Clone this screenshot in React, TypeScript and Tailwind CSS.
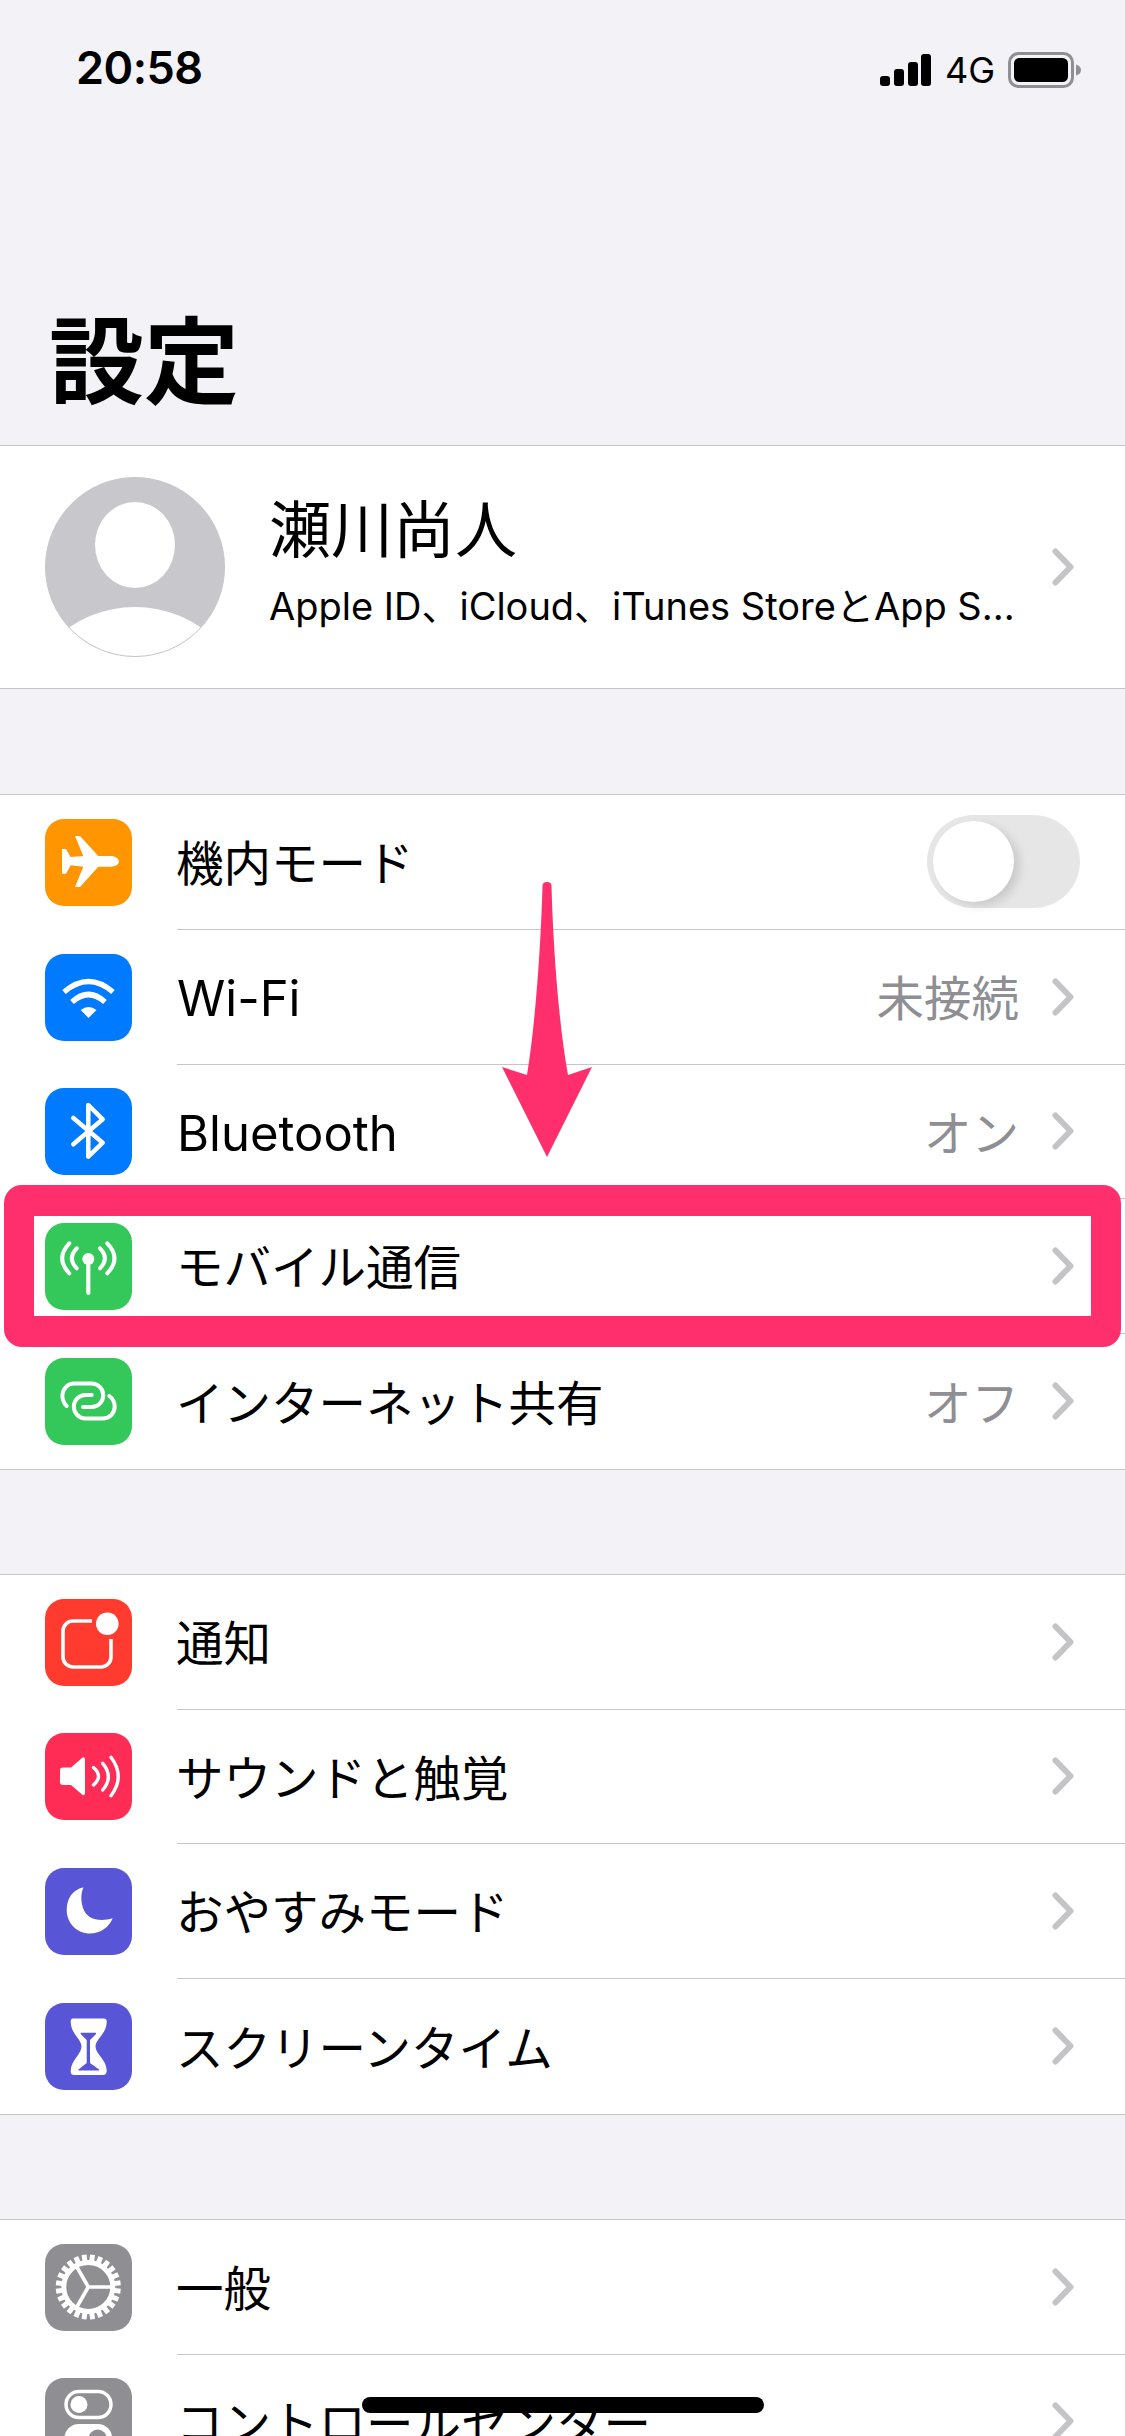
const FONT = "font-['Inter','Noto_Sans_CJK_JP',sans-serif]";

function Chevron() {
  return (
    <svg width="22" height="38" viewBox="0 0 22 38" className="shrink-0">
      <path d="M3.5 3.5 L18.5 19 L3.5 34.5" fill="none" stroke="#c4c4c7" strokeWidth="6" strokeLinecap="round" strokeLinejoin="round" />
    </svg>
  );
}

const sw = { fill: "none", stroke: "#fff", strokeLinecap: "round" as const, strokeLinejoin: "round" as const };

function Plane() {
  return <path fill="#fff" d="M74 42.5C74 39.5 70 37 66 37H53.3L35 17H30L38.3 37L25.7 38L21 30H17V54.7H21L25.7 46.3L38.3 47.7L30 68H35L53.3 47.7H66C70 47.7 74 45.5 74 42.5Z" />;
}
function Wifi() {
  return (
    <g>
      <path {...sw} strokeLinecap="butt" strokeWidth="5.5" d="M19 38Q43.5 17 68 38" />
      <path {...sw} strokeLinecap="butt" strokeWidth="5.5" d="M27 48Q43.5 33 60 48" />
      <path fill="#fff" d="M35.7 56Q43.5 50 51.5 56L43.5 64Z" />
    </g>
  );
}
function Bluetooth() {
  return <path {...sw} strokeWidth="4.5" d="M28.3 30L57.7 54.7L43.3 68.7V17L57.7 31.3L28.3 56.3" />;
}
function Cell() {
  return (
    <g>
      <circle cx="43.3" cy="36" r="6" fill="#fff" />
      <path {...sw} strokeWidth="4.2" d="M43.3 38V70" />
      <path {...sw} strokeWidth="4" d="M31.7 25.3Q22 35.3 31.7 45.3M24.3 20.3Q10 35.3 24.3 50.3M55 25.3Q64.7 35.3 55 45.3M62.3 20.3Q76.7 35.3 62.3 50.3" />
    </g>
  );
}
function Hotspot() {
  return (
    <g>
      <path {...sw} strokeWidth="4" d="M21.7 48C18 45 17 39 17.5 36C18.5 30 23 25.5 29 25.5H46.5A11.75 11.75 0 0 1 46.5 49H38" />
      <path {...sw} strokeWidth="4" d="M46.7 37H40.5A11.7 11.7 0 0 0 40.5 60.4H58A11.7 11.7 0 0 0 69.7 48.7C69.7 44 67 40 64.3 38" />
    </g>
  );
}
function Bell() {
  return (
    <g>
      <path {...sw} strokeWidth="3.6" strokeLinecap="butt" d="M47 22H28A10 10 0 0 0 18 32V58A10 10 0 0 0 28 68H56A10 10 0 0 0 66 58V40" />
      <circle cx="62.3" cy="24.7" r="11.3" fill="#fff" />
    </g>
  );
}
function Sound() {
  return (
    <g>
      <path fill="#fff" d="M18 34.5H26L37 25Q40 23 40 27V59.5Q40 63.5 37 61.5L26 52H18Q15 52 15 49V37.5Q15 34.5 18 34.5Z" />
      <path {...sw} strokeWidth="3.4" d="M48.5 34.5Q58.5 43.3 48.5 52M57.7 30.3Q69 43.7 57.7 57M66 24.3Q80.5 43.5 66 62.7" />
    </g>
  );
}
function Moon() {
  return <path fill="#fff" d="M38.5 19.3C27 22 21.7 31 21.7 42C21.7 55 32 65.5 45 65.5C56 65.5 64 59 67.7 50.3C55 54 42 52 38 40C35.5 32 36 25 38.5 19.3Z" />;
}
function Hourglass() {
  return (
    <g>
      <path fill="#fff" d="M28 15.5H59Q62 15.5 61.7 19C61.5 31 50.5 36 50.5 43.5C50.5 51 62 57 61.7 68Q61.5 72 58 72H29Q25.5 72 25.7 68C26 57 36.5 51 36.5 43.5C36.5 36 26 31 25.7 19Q25.5 15.5 28 15.5Z" />
      <path fill="#5856d6" d="M35.7 29.7H51V31L45 37V60L54 66.5V67.5H33.5V66.5L41.7 60V37L35.7 31Z" />
    </g>
  );
}
function Gear() {
  const teeth = Array.from({ length: 24 }, (_, i) => i * 15 + 7.5);
  return (
    <g>
      {teeth.map((a) => (
        <path key={a} d="M43.3 17V10.5" stroke="#fff" strokeWidth="5" transform={`rotate(${a} 43.3 43)`} />
      ))}
      <circle cx="43.3" cy="43" r="24.5" fill="none" stroke="#fff" strokeWidth="5" />
      <path {...sw} strokeWidth="3.6" d="M43.3 43H68M43.3 43L31 21.5M43.3 43L31 64.5" />
    </g>
  );
}
function Toggles() {
  return (
    <g>
      <rect x="21" y="13.5" width="45" height="26" rx="13" fill="none" stroke="#fff" strokeWidth="3.5" />
      <circle cx="34" cy="26.5" r="8.5" fill="#fff" />
      <rect x="19.3" y="46" width="48" height="29" rx="14.5" fill="#fff" />
      <circle cx="52.7" cy="60.5" r="9" fill="#8e8e93" />
    </g>
  );
}

function Row({ icon, color, label, value, last, latin, toggle }: { icon: React.ReactNode; color: string; label: string; value?: string; last?: boolean; latin?: boolean; toggle?: boolean }) {
  return (
    <div className="flex h-[134.75px] items-center pl-[45px]">
      <div className={`w-[87px] h-[87px] rounded-[19px] shrink-0 ${color}`}>
        <svg width="87" height="87" viewBox="0 0 87 87">{icon}</svg>
      </div>
      <div className={`ml-[45px] flex-1 h-full flex items-center pr-[51px] ${last ? "" : "border-b border-[#c6c6c8]"}`}>
        <span className={`flex-1 text-black pt-[4px] leading-none whitespace-nowrap ${latin ? "text-[49px]" : "text-[47.5px] -ml-[1px]"}`}>{label}</span>
        {value && <span className="text-[47.5px] leading-none text-[#8e8e93] mr-[33px] pt-[4px] whitespace-nowrap">{value}</span>}
        {toggle ? (
          <div className="w-[153px] h-[93px] -mr-[6px] rounded-full bg-[#e6e6e6] p-[6px]">
            <div className="w-[81px] h-[81px] rounded-full bg-white shadow-[6px_4px_10px_rgba(0,0,0,0.12)]" />
          </div>
        ) : (
          <Chevron />
        )}
      </div>
    </div>
  );
}

export default function App() {
  return (
    <div className={`relative w-[1125px] h-[2436px] overflow-hidden bg-[#f2f2f7] ${FONT}`}>
      <header className="h-[445px] flex flex-col justify-between">
        <div className="flex items-start justify-between pt-[44px] pl-[76px] pr-[43px]">
          <span className="text-[45px] leading-[48px] font-semibold tracking-[-0.5px] text-black">20:58</span>
          <div className="flex items-center mt-[8px]">
            <svg width="51" height="32" viewBox="0 0 51 32">
              <rect x="0" y="22" width="10" height="10" rx="3" fill="#000" />
              <rect x="14" y="15" width="10" height="17" rx="3" fill="#000" />
              <rect x="28" y="8" width="10" height="24" rx="3" fill="#000" />
              <rect x="41" y="0" width="10" height="32" rx="3" fill="#000" />
            </svg>
            <span className="ml-[14px] text-[36px] leading-none text-black">4G</span>
            <svg width="74" height="36" viewBox="0 0 74 36" className="ml-[13px]">
              <rect x="1.5" y="1.5" width="63" height="33" rx="9" fill="none" stroke="#8e8e93" strokeWidth="3" />
              <rect x="6" y="6" width="54" height="24" rx="5.5" fill="#000" />
              <path d="M68 12.5Q73 14 73 18T68 23.5Z" fill="#8e8e93" />
            </svg>
          </div>
        </div>
        <h1 className="pl-[49px] pb-[35px] text-[95px] leading-[95px] font-bold text-black">設定</h1>
      </header>

      <section className="h-[244px] bg-white border-y border-[#c6c6c8] flex items-center pl-[45px] pr-[51px]">
        <div className="relative w-[180px] h-[180px] rounded-full bg-[#c7c7cc] overflow-hidden border border-[#c7c7cc] shrink-0">
          <div className="absolute left-[49px] top-[24px] w-[80px] h-[86px] rounded-[50%] bg-white" />
          <div className="absolute left-[-27px] top-[129px] w-[232px] h-[232px] rounded-[50%] bg-white" />
        </div>
        <div className="ml-[44px] flex-1 flex flex-col pb-[10px]">
          <span className="text-[62px] leading-[70px] text-black">瀬川尚人</span>
          <span className="mt-[18px] text-[38px] leading-[44px] text-black whitespace-nowrap">Apple ID、iCloud、iTunes StoreとApp S...</span>
        </div>
        <Chevron />
      </section>

      <section className="mt-[105px] bg-white border-y border-[#c6c6c8]">
        <Row icon={<Plane />} color="bg-[#ff9500]" label="機内モード" toggle />
        <Row icon={<Wifi />} color="bg-[#007aff]" label="Wi-Fi" value="未接続" latin />
        <Row icon={<Bluetooth />} color="bg-[#007aff]" label="Bluetooth" value="オン" latin />
        <Row icon={<Cell />} color="bg-[#34c759]" label="モバイル通信" />
        <Row icon={<Hotspot />} color="bg-[#34c759]" label="インターネット共有" value="オフ" last />
      </section>

      <section className="mt-[104px] bg-white border-y border-[#c6c6c8]">
        <Row icon={<Bell />} color="bg-[#ff3b30]" label="通知" />
        <Row icon={<Sound />} color="bg-[#ff2d55]" label="サウンドと触覚" />
        <Row icon={<Moon />} color="bg-[#5856d6]" label="おやすみモード" />
        <Row icon={<Hourglass />} color="bg-[#5856d6]" label="スクリーンタイム" last />
      </section>

      <section className="mt-[104px] bg-white border-y border-[#c6c6c8]">
        <Row icon={<Gear />} color="bg-[#8e8e93]" label="一般" />
        <Row icon={<Toggles />} color="bg-[#8e8e93]" label="コントロールセンター" />
      </section>

      <div className="absolute left-[3.5px] top-[1185px] w-[1117px] h-[162px] rounded-[18px] border-[30px] border-y-[31px] border-[#ff2f6d]" />
      <svg className="absolute left-[500px] top-[880px]" width="94" height="280" viewBox="0 0 94 280">
        <path fill="#ff2f6d" d="M42.5 6Q42.5 2 47 2T51.5 6C53 60 58 140 68 195L92 187L47 277L2 187L27 195C36 140 41 60 42.5 6Z" />
      </svg>
      <div className="absolute left-[362px] top-[2397px] w-[402px] h-[16px] rounded-full bg-black" />
    </div>
  );
}
